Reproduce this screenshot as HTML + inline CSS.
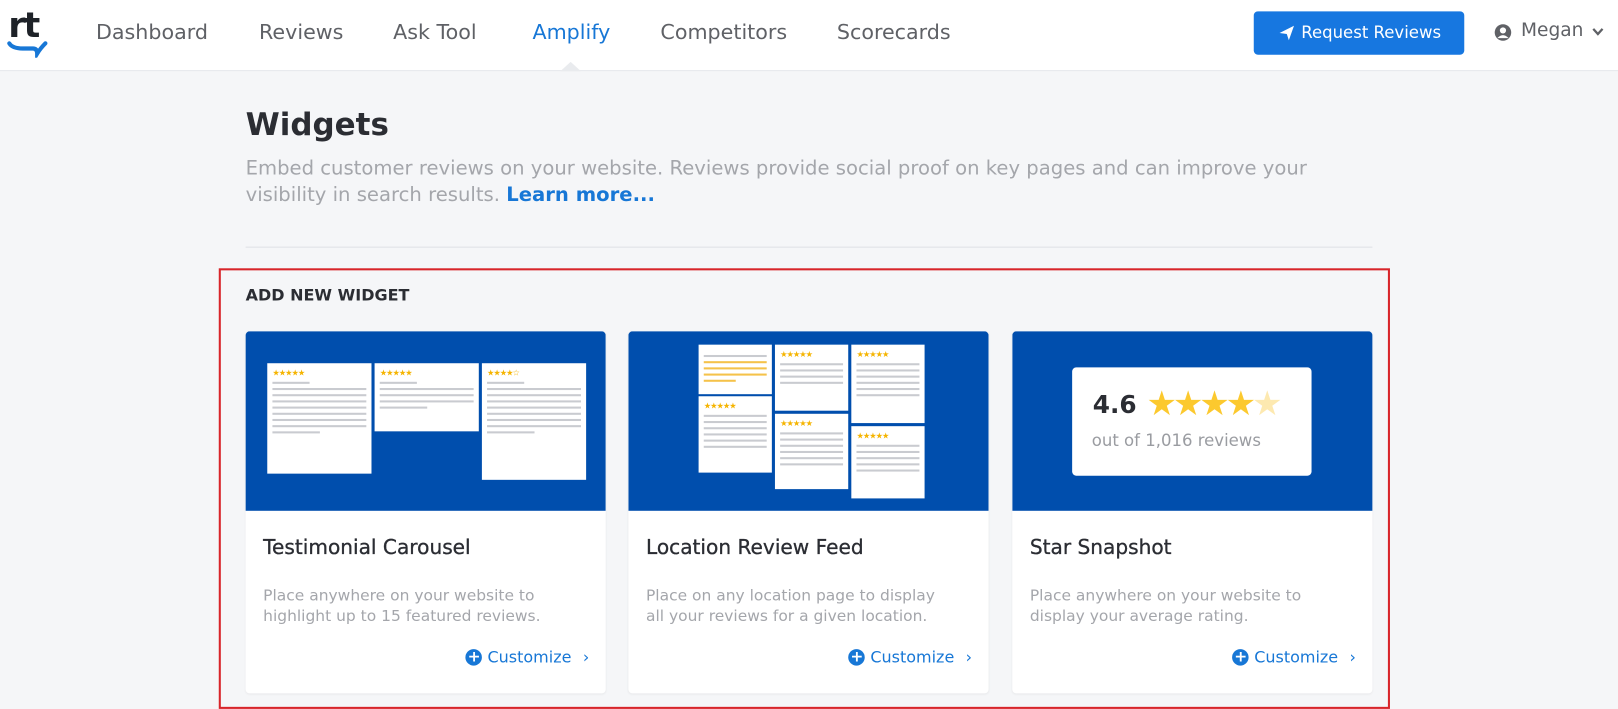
<!DOCTYPE html>
<html><head><meta charset="utf-8"><style>
*{box-sizing:border-box;margin:0;padding:0}
html,body{width:1618px;height:709px;overflow:hidden;background:#f5f6f8}
#w{width:1568px;height:687px;transform:scale(1.0319);transform-origin:0 0;position:relative;font-family:"DejaVu Sans","Liberation Sans",sans-serif;color:#2b2d33}
.hdr{position:absolute;left:0;top:0;width:1568px;height:69px;background:#fff;border-bottom:1px solid #e4e6ea}
.nav{position:absolute;top:19px;font-size:20px;color:#5f6166}
.abs{position:absolute}
.card{position:absolute;top:321px;width:349px;height:351px;background:#fff;border-radius:4px;overflow:hidden;box-shadow:0 1px 2px rgba(0,0,0,.06)}
.card .top{height:174px;background:#004ead;position:relative}
.card h3{position:absolute;left:17px;top:198px;font-size:19.5px;font-weight:normal;color:#2b2d33;-webkit-text-stroke:.3px #2b2d33}
.card p{position:absolute;left:17px;top:246px;font-size:15px;line-height:20px;color:#a4a6ab;width:300px}
.cust{position:absolute;right:16px;top:307px;font-size:15.5px;color:#1777d6;display:flex;align-items:center;gap:5px}
.pl{width:16px;height:16px;border-radius:50%;background:#1777d6;color:#fff;font-size:15px;line-height:15px;text-align:center;font-weight:bold}
.mini{position:absolute;background:#fff;padding:6px 5px}
.st{color:#f5b400;font-size:8px;letter-spacing:-1px;line-height:8px}
.ln{height:2px;background:#c9cbd0;margin-top:4px}
</style></head><body><div id="w">
<div class="hdr">
 <div class="abs" style="left:8px;top:5px;font-size:34px;font-weight:bold;color:#1e2228;letter-spacing:-2px">rt</div>
 <svg class="abs" style="left:6px;top:38px" width="42" height="18"><path d="M3 4 Q6 9 16 9 L26 9 Q30 9 30 14 Q33 9 38 4" stroke="#1777d6" stroke-width="4" fill="none" stroke-linecap="round"/></svg>
 <div class="nav" style="left:93px">Dashboard</div>
 <div class="nav" style="left:251px">Reviews</div>
 <div class="nav" style="left:381px">Ask Tool</div>
 <div class="nav" style="left:516px;color:#1777d6">Amplify</div>
 <div class="nav" style="left:640px">Competitors</div>
 <div class="nav" style="left:811px">Scorecards</div>
 <div class="abs" style="left:543px;top:60px;width:0;height:0;border-left:10px solid transparent;border-right:10px solid transparent;border-bottom:9px solid #e9ebee"></div>
 <div class="abs" style="left:1215px;top:11px;width:204px;height:42px;background:#1777e0;border-radius:4px;color:#fff;font-size:16px;line-height:42px;padding-left:46px">Request Reviews</div>
 <svg class="abs" style="left:1239px;top:24px" width="16" height="16"><path d="M1 8 L15 1 L10 15 L8 9 Z" fill="#fff"/></svg>
 <svg class="abs" style="left:1448px;top:23px" width="17" height="17"><circle cx="8.5" cy="8.5" r="8" fill="#5f6166"/><circle cx="8.5" cy="6.5" r="3" fill="#fff"/><path d="M3 14 Q8.5 8 14 14" fill="#fff"/></svg>
 <div class="nav" style="left:1474px;top:19px;font-size:18px">Megan</div>
 <svg class="abs" style="left:1543px;top:27px" width="11" height="8"><path d="M1 1 L5.5 6 L10 1" stroke="#5f6166" stroke-width="2.2" fill="none"/></svg>
</div>
<div class="abs" style="left:238px;top:104px;font-size:30px;font-weight:bold;color:#2b2d33">Widgets</div>
<div class="abs" style="left:238px;top:150px;font-size:19px;line-height:26px;color:#a4a6ab;width:1100px">Embed customer reviews on your website. Reviews provide social proof on key pages and can improve your visibility in search results. <b style="color:#1777d6">Learn more...</b></div>
<div class="abs" style="left:238px;top:239px;width:1092px;height:1px;background:#dfe1e5"></div>
<div class="abs" style="left:212px;top:260px;width:1135px;height:427px;border:2px solid #d8252a"></div>
<div class="abs" style="left:238px;top:277px;font-size:15.5px;font-weight:bold;color:#2b2d33">ADD NEW WIDGET</div>

<div class="card" style="left:238px">
 <div class="top">
  <div class="mini" style="left:21px;top:31px;width:101px;height:107px"><div class="st">★★★★★</div><div class="ln" style="width:40%"></div><div class="ln"></div><div class="ln"></div><div class="ln"></div><div class="ln"></div><div class="ln"></div><div class="ln"></div><div class="ln"></div><div class="ln" style="width:50%"></div></div>
  <div class="mini" style="left:125px;top:31px;width:101px;height:66px"><div class="st">★★★★★</div><div class="ln" style="width:40%"></div><div class="ln"></div><div class="ln"></div><div class="ln"></div><div class="ln" style="width:50%"></div></div>
  <div class="mini" style="left:229px;top:31px;width:101px;height:113px"><div class="st">★★★★☆</div><div class="ln" style="width:40%"></div><div class="ln"></div><div class="ln"></div><div class="ln"></div><div class="ln"></div><div class="ln"></div><div class="ln"></div><div class="ln"></div><div class="ln" style="width:50%"></div></div>
 </div>
 <h3>Testimonial Carousel</h3>
 <p>Place anywhere on your website to highlight up to 15 featured reviews.</p>
 <div class="cust"><span class="pl">+</span>Customize <span style="margin-left:6px">›</span></div>
</div>
<div class="card" style="left:609px">
 <div class="top">
  <div class="mini" style="left:68px;top:13px;width:71px;height:48px"><div class="ln"></div><div class="ln" style="background:#f5c24a"></div><div class="ln" style="background:#f5c24a"></div><div class="ln" style="background:#f5c24a"></div><div class="ln" style="background:#f5c24a;width:50%"></div></div>
  <div class="mini" style="left:68px;top:63px;width:71px;height:74px"><div class="st">★★★★★</div><div class="ln"></div><div class="ln"></div><div class="ln"></div><div class="ln"></div><div class="ln"></div><div class="ln"></div></div>
  <div class="mini" style="left:142px;top:13px;width:71px;height:64px"><div class="st">★★★★★</div><div class="ln"></div><div class="ln"></div><div class="ln"></div><div class="ln"></div></div>
  <div class="mini" style="left:142px;top:80px;width:71px;height:73px"><div class="st">★★★★★</div><div class="ln"></div><div class="ln"></div><div class="ln"></div><div class="ln"></div><div class="ln"></div><div class="ln"></div></div>
  <div class="mini" style="left:216px;top:13px;width:71px;height:76px"><div class="st">★★★★★</div><div class="ln"></div><div class="ln"></div><div class="ln"></div><div class="ln"></div><div class="ln"></div><div class="ln"></div></div>
  <div class="mini" style="left:216px;top:92px;width:71px;height:70px"><div class="st">★★★★★</div><div class="ln"></div><div class="ln"></div><div class="ln"></div><div class="ln"></div><div class="ln"></div></div>
 </div>
 <h3>Location Review Feed</h3>
 <p>Place on any location page to display all your reviews for a given location.</p>
 <div class="cust"><span class="pl">+</span>Customize <span style="margin-left:6px">›</span></div>
</div>
<div class="card" style="left:981px">
 <div class="top">
  <div class="abs" style="left:58px;top:35px;width:232px;height:105px;background:#fff;border-radius:4px">
   <div class="abs" style="left:20px;top:22px;font-size:24px;font-weight:bold;color:#2b2d33">4.6</div>
   <div class="abs" style="left:72px;top:15px;font-size:33px;color:#fcc92e;letter-spacing:-4px;font-family:'DejaVu Sans',sans-serif">★★★★<span style="color:#fde9b0">★</span></div>
   <div class="abs" style="left:19px;top:61px;font-size:16px;color:#9a9ca1">out of 1,016 reviews</div>
  </div>
 </div>
 <h3>Star Snapshot</h3>
 <p>Place anywhere on your website to display your average rating.</p>
 <div class="cust"><span class="pl">+</span>Customize <span style="margin-left:6px">›</span></div>
</div>
</div></body></html>
